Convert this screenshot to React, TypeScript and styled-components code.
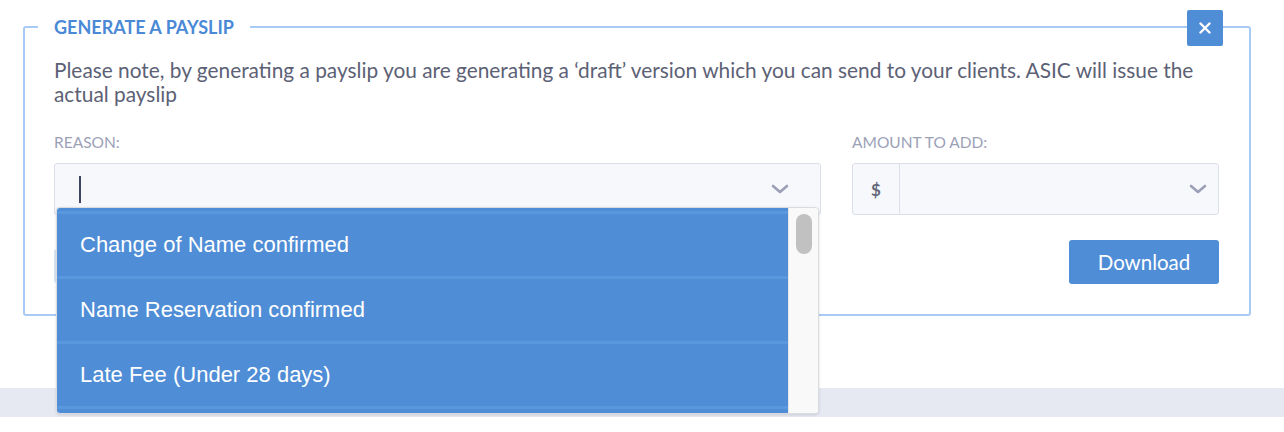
import React from "react";
import styled, { createGlobalStyle } from "styled-components";

const GlobalStyle = createGlobalStyle`
  body {
    margin: 0;
    background: #ffffff;
    font-family: "Source Sans Pro", "Lato", "Noto Sans", sans-serif;
  }
`;

const Page = styled.div`
  padding: 17px 33px 0 23px;
`;

const PanelWrap = styled.div`
  position: relative;
`;

const Panel = styled.fieldset`
  margin: 0;
  border: 2px solid #a8cbf5;
  border-radius: 3px;
  padding: 21px 30px 30px 29px;
  min-width: 0;
`;

const Legend = styled.legend`
  margin-left: -16px;
  padding: 0 16px;
  font-size: 18px;
  line-height: 20px;
  font-weight: 700;
  color: #4a89d6;
`;

const CloseButton = styled.button`
  position: absolute;
  top: -7px;
  right: 28px;
  width: 36px;
  height: 36px;
  border: none;
  border-radius: 2px;
  background: #4f8dd6;
  display: flex;
  align-items: center;
  justify-content: center;
  padding: 0;
`;

const Note = styled.p`
  margin: 0 0 27px;
  font-size: 20.85px;
  line-height: 24px;
  color: #5c6175;
`;

const Fields = styled.div`
  display: grid;
  grid-template-columns: 1fr 367px;
  column-gap: 31px;
`;

const Field = styled.div`
  position: relative;
`;

const Label = styled.div`
  font-size: 15.5px;
  line-height: 18px;
  color: #9ca1b7;
  text-transform: uppercase;
  margin-bottom: 12px;
`;

const SelectBox = styled.div`
  box-sizing: border-box;
  height: 52px;
  border: 1px solid #dcdfe9;
  border-radius: 3px;
  background: #f7f8fc;
  display: flex;
  align-items: center;
`;

const Caret = styled.span`
  width: 2px;
  height: 27px;
  background: #3e4560;
  margin-left: 24px;
`;

const Grow = styled.div`
  flex: 1;
`;

const Chevron = styled.svg<{ $inset: number }>`
  margin-right: ${(p) => p.$inset}px;
`;

const Addon = styled.div`
  width: 46px;
  height: 100%;
  border-right: 1px solid #dcdfe9;
  display: flex;
  align-items: center;
  justify-content: center;
  font-size: 17px;
  font-weight: 700;
  color: #646879;
`;

const Dropdown = styled.div`
  position: absolute;
  left: 2px;
  top: 74px;
  width: 761px;
  height: 205px;
  border: 1px solid #d9dbe0;
  border-radius: 4px;
  box-shadow: 0 1px 3px rgba(0, 0, 0, 0.12);
  background: #ffffff;
  display: flex;
  overflow: hidden;
  z-index: 2;
`;

const OptionList = styled.ul`
  list-style: none;
  margin: 0;
  padding: 3px 0 0;
  flex: 1;
  background: #4f8dd6;
`;

const Option = styled.li`
  height: 62px;
  border-top: 3px solid #5b97dc;
  display: flex;
  align-items: center;
  padding-left: 23px;
  font-family: "Liberation Sans", Arial, sans-serif;
  font-size: 22px;
  color: #ffffff;

  &:last-child {
    border-bottom: 3px solid #5b97dc;
  }
`;

const ScrollTrack = styled.div`
  width: 29px;
  background: #f9f9f9;
  border-left: 1px solid #e8e8e8;
  padding-top: 6px;
  display: flex;
  justify-content: center;
`;

const ScrollThumb = styled.div`
  width: 16px;
  height: 40px;
  border-radius: 8px;
  background: #c1c1c1;
`;

const Actions = styled.div`
  display: flex;
  justify-content: space-between;
  align-items: center;
  margin-top: 25px;
`;

const SecondaryButton = styled.button`
  width: 120px;
  height: 34px;
  margin-top: 8px;
  border: none;
  border-radius: 3px;
  background: #dbe6f5;
`;

const PrimaryButton = styled.button`
  width: 150px;
  height: 44px;
  border: none;
  border-radius: 3px;
  background: #4f8dd6;
  color: #ffffff;
  font-family: "Source Sans Pro", "Lato", "Noto Sans", sans-serif;
  font-size: 20.5px;
`;

const FooterBand = styled.div`
  margin-top: 72px;
  height: 29px;
  background: #e6e9f1;
`;

const ChevronIcon = ({ inset }: { inset: number }) => (
  <Chevron $inset={inset} width="18" height="10" viewBox="0 0 18 10">
    <polyline points="2,2 9,8 16,2" fill="none" stroke="#9ba0b6" strokeWidth="2.6" strokeLinecap="round" strokeLinejoin="round" />
  </Chevron>
);

const reasons = ["Change of Name confirmed", "Name Reservation confirmed", "Late Fee (Under 28 days)"];

export default function App() {
  return (
    <>
      <GlobalStyle />
      <Page>
        <PanelWrap>
          <Panel>
            <Legend>GENERATE A PAYSLIP</Legend>
            <Note>
              Please note, by generating a payslip you are generating a ‘draft’ version which you can send to your clients. ASIC will issue the actual payslip
            </Note>
            <Fields>
              <Field>
                <Label>Reason:</Label>
                <SelectBox>
                  <Caret />
                  <Grow />
                  <ChevronIcon inset={31} />
                </SelectBox>
                <Dropdown>
                  <OptionList>
                    {reasons.map((r) => (
                      <Option key={r}>{r}</Option>
                    ))}
                  </OptionList>
                  <ScrollTrack>
                    <ScrollThumb />
                  </ScrollTrack>
                </Dropdown>
              </Field>
              <Field>
                <Label>Amount to add:</Label>
                <SelectBox>
                  <Addon>$</Addon>
                  <Grow />
                  <ChevronIcon inset={11} />
                </SelectBox>
              </Field>
            </Fields>
            <Actions>
              <SecondaryButton />
              <PrimaryButton>Download</PrimaryButton>
            </Actions>
          </Panel>
          <CloseButton aria-label="Close">
            <svg width="12" height="12" viewBox="0 0 12 12">
              <path d="M1.5 1.5 L10.5 10.5 M10.5 1.5 L1.5 10.5" stroke="#ffffff" strokeWidth="2.4" strokeLinecap="round" />
            </svg>
          </CloseButton>
        </PanelWrap>
      </Page>
      <FooterBand />
    </>
  );
}
